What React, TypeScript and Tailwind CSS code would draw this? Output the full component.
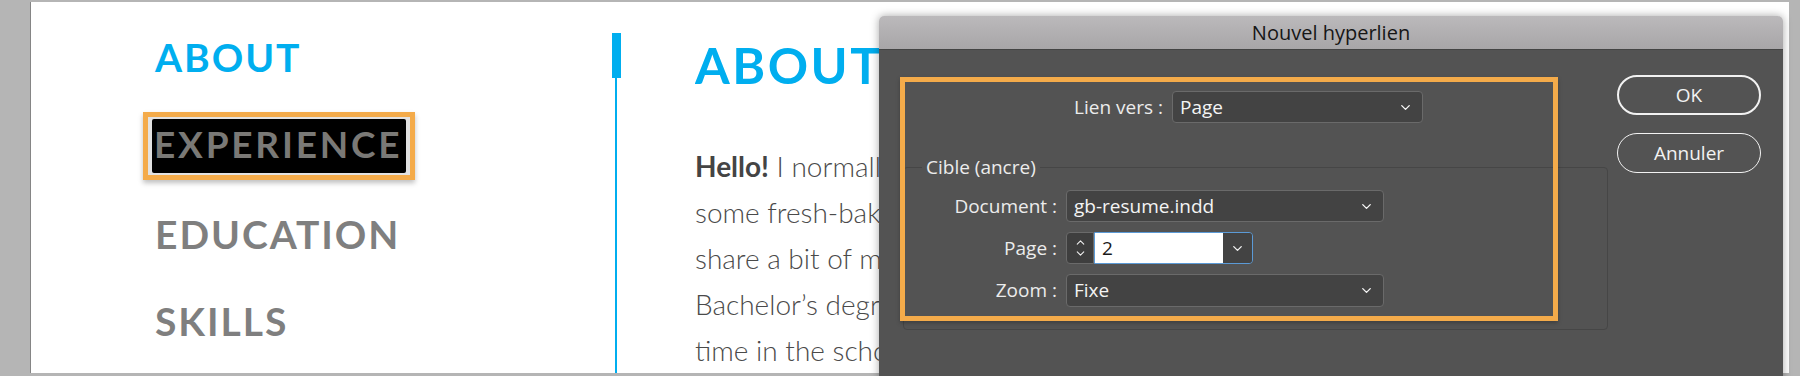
import React from "react";
import { ChevronDown, ChevronUp } from "lucide-react";

function Select({ value, className }: { value: string; className: string }) {
  return (
    <div
      className={`flex items-center justify-between h-[32px] bg-[#434343] border border-[#6a6a6a] rounded-[4px] pl-[7px] pr-[9px] text-[#f4f4f4] text-[19px] ${className}`}
    >
      <span>{value}</span>
      <ChevronDown size={15} strokeWidth={2.2} className="text-[#f4f4f4]" />
    </div>
  );
}

function Label({ children, className }: { children: React.ReactNode; className: string }) {
  return <div className={`text-right text-[#ececec] text-[19px] whitespace-nowrap ${className}`}>{children}</div>;
}

export default function App() {
  return (
    <div className="relative w-[1800px] h-[376px] overflow-hidden bg-[#b5b5b5]">
      {/* page */}
      <div className="ml-[30px] mt-[2px] w-[1759px] h-[371px] bg-white border-l border-[#858585] flex overflow-hidden font-['Lato',sans-serif]">
        {/* nav */}
        <div className="w-[581px] shrink-0 pl-[124px] flex flex-col items-start">
          <div className="mt-[36px] text-[39px] leading-none font-bold tracking-[0.05em] text-[#00aeef]">ABOUT</div>
          <div className="mt-[35px] -ml-[12px] border-[5px] border-[#f4ab4a] bg-[#e2e2e2] px-[4px] py-[2px] shadow-[0_3px_5px_rgba(0,0,0,0.25)]">
            <div className="bg-black rounded-[2px] pl-[2px] pr-[4px] pt-[6px] pb-[11px] text-[37px] leading-none font-bold tracking-[0.075em] text-[#7a7976]">
              EXPERIENCE
            </div>
          </div>
          <div className="mt-[35px] text-[39px] leading-none font-bold tracking-[0.05em] text-[#7f7f7f]">EDUCATION</div>
          <div className="mt-[48px] text-[39px] leading-none font-bold tracking-[0.05em] text-[#7f7f7f]">SKILLS</div>
        </div>
        {/* divider */}
        <div className="w-[9px] shrink-0 flex flex-col pt-[31px]">
          <div className="w-[9px] h-[45px] bg-[#00aeef]" />
          <div className="ml-[3px] w-[2px] flex-1 bg-[#00aeef]" />
        </div>
        {/* content, clipped where the dialog begins */}
        <div className="ml-[74px] w-[184px] shrink-0 overflow-hidden flex flex-col whitespace-nowrap">
          <div className="mt-[38px] text-[50px] leading-none font-bold tracking-[0.05em] text-[#00aeef]">ABOUT</div>
          <div className="mt-[53px] text-[28px] leading-[46px] font-light text-[#4a4a4a]">
            <div>
              <span className="font-bold text-[#444444]">Hello!</span> I normally
            </div>
            <div>some fresh-baked</div>
            <div>share a bit of my</div>
            <div>Bachelor’s degree</div>
            <div>time in the school</div>
          </div>
        </div>
      </div>

      {/* dialog */}
      <div className="absolute left-[879px] top-[16px] w-[904px] h-[372px] rounded-t-[5px] overflow-hidden flex flex-col shadow-[0_0_8px_rgba(0,0,0,0.35)] font-['Open_Sans',sans-serif]">
        <div className="h-[34px] shrink-0 flex items-center justify-center bg-gradient-to-b from-[#bbb9bb] to-[#a8a6a8] border-b border-[#444444] text-[20px] font-medium text-[#161616]">
          Nouvel hyperlien
        </div>
        <div className="relative flex-1 bg-[#535353] flex">
          {/* form */}
          <div className="w-[729px] shrink-0 pl-[24px] pt-[41px] flex flex-col">
            <div className="flex items-center gap-[9px]">
              <Label className="w-[260px]">Lien vers :</Label>
              <Select value="Page" className="w-[251px]" />
            </div>
            <fieldset className="mt-[32px] border border-[#464646] rounded-[4px] px-0 pb-[22px] m-0">
              <legend className="ml-[18px] px-[4px] text-[19px] leading-[24px] text-[#ececec]">Cible (ancre)</legend>
              <div className="mt-[11px] flex flex-col gap-[10px]">
                <div className="flex items-center gap-[9px]">
                  <Label className="w-[153px]">Document :</Label>
                  <Select value="gb-resume.indd" className="w-[318px]" />
                </div>
                <div className="flex items-center gap-[9px]">
                  <Label className="w-[153px]">Page :</Label>
                  <div className="flex h-[32px]">
                    <div className="w-[28px] flex flex-col items-center justify-center bg-[#3e3e3e] border border-[#6a6a6a] rounded-l-[4px] text-[#eeeeee] -space-y-[2px]">
                      <ChevronUp size={13} strokeWidth={2} />
                      <ChevronDown size={13} strokeWidth={2} />
                    </div>
                    <div className="flex w-[159px] border-[1.5px] border-[#5b9ad6] rounded-r-[4px] overflow-hidden">
                      <div className="flex-1 bg-white flex items-center pl-[7px] text-[19px] text-[#1a1a1a]">2</div>
                      <div className="w-[29px] bg-[#434343] flex items-center justify-center text-[#eeeeee]">
                        <ChevronDown size={15} strokeWidth={2.2} />
                      </div>
                    </div>
                  </div>
                </div>
                <div className="flex items-center gap-[9px]">
                  <Label className="w-[153px]">Zoom :</Label>
                  <Select value="Fixe" className="w-[318px] h-[33px]" />
                </div>
              </div>
            </fieldset>
          </div>
          {/* buttons */}
          <div className="ml-[9px] pt-[25px] flex flex-col gap-[18px]">
            <div className="w-[144px] h-[40px] rounded-full border-[2.5px] border-[#f2f2f2] flex items-center justify-center text-[19px] text-[#f2f2f2]">
              OK
            </div>
            <div className="w-[144px] h-[40px] rounded-full border-[1.5px] border-[#f2f2f2] flex items-center justify-center text-[19px] text-[#f2f2f2]">
              Annuler
            </div>
          </div>
          {/* annotation */}
          <div className="absolute left-[21px] top-[27px] w-[658px] h-[244px] border-[5px] border-[#f4ab4a] pointer-events-none shadow-[0_2px_4px_rgba(0,0,0,0.25)]" />
        </div>
      </div>
    </div>
  );
}
